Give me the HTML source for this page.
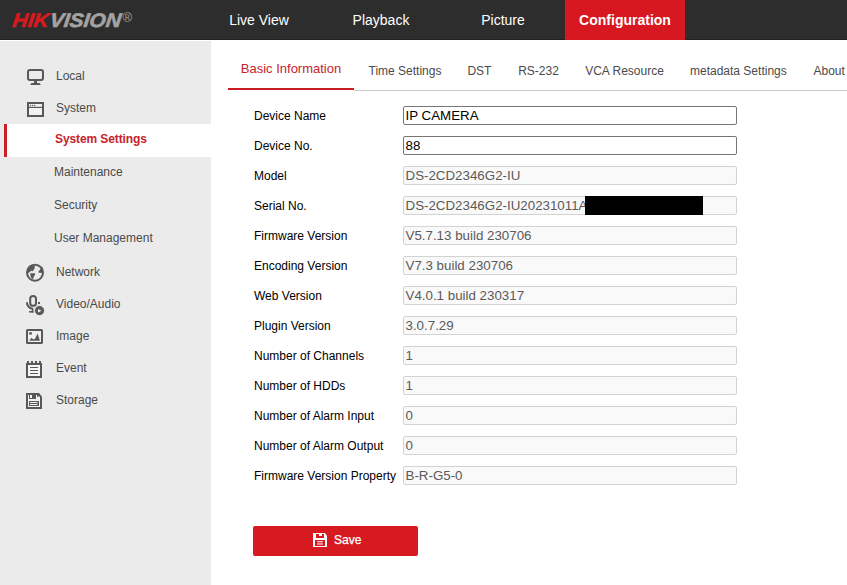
<!DOCTYPE html>
<html><head><meta charset="utf-8"><title>Configuration</title>
<style>
*{box-sizing:border-box;margin:0;padding:0}
html,body{width:847px;height:585px;overflow:hidden;background:#fff;font-family:"Liberation Sans",Arial,sans-serif;font-size:12px;color:#333}
#hdr{position:absolute;left:0;top:0;width:847px;height:40px;background:#2d2d2d;border-bottom:1px solid #222}
#logo{position:absolute;left:12px;top:8px;height:24px;line-height:24px;font-size:19.5px;font-weight:bold;font-style:italic;white-space:nowrap;transform-origin:0 80%;transform:scaleX(1.075) skewX(-6deg);-webkit-text-stroke:.6px currentColor}
#logo .r{color:#d71920}#logo .g{color:#a3a3a3;margin-left:1px}
#reg{position:absolute;left:122.5px;top:9.5px;font-size:13px;color:#a3a3a3;line-height:16px}
.nav{position:absolute;top:0;height:40px;width:122px;text-align:center;line-height:40px;font-size:14px;color:#fff}
.nav.on{background:#d71820;font-weight:bold;width:120px}
#side{position:absolute;left:0;top:41px;width:211px;height:544px;background:#ebebeb}
.mi{position:absolute;left:56px;font-size:12px;color:#4a4a4a;line-height:16px}
.si{position:absolute;left:54px;font-size:12px;color:#4a4a4a;line-height:16px}
#act{position:absolute;left:4px;top:124px;width:207px;height:33px;background:#fff;border-left:3px solid #cb2029}
#act span{position:absolute;left:48px;top:7px;font-weight:bold;color:#c8222a;font-size:12px;line-height:16px;letter-spacing:-.1px}
#ics{position:absolute;left:0;top:0;width:211px;height:585px}
#tabs{position:absolute;left:228px;top:50px;width:619px;height:41px}
#tabs:after{content:"";position:absolute;left:126px;right:0;top:40px;height:1px;background:#cbcbcb}
.tab{position:absolute;top:1px;height:40px;line-height:40px;font-size:12px;color:#4a4a4a;white-space:nowrap}
.tab.on{top:0;left:0;width:126px;text-align:center;color:#c8222a;font-size:13px;border-bottom:2px solid #cb1c24;height:40px;line-height:37px}
.row{position:absolute;left:254px;height:18px;line-height:18px;font-size:12px;color:#000;white-space:nowrap}
.inp{position:absolute;left:403px;width:334px;height:19px;border:1px solid #767676;border-radius:2px;background:#fff;font-size:13.33px;line-height:17px;padding:0 2px 0 1.5px;color:#000;white-space:nowrap;overflow:hidden}
.inp.d{border-color:#d3d3d3;background:#f9f9f9;color:#5a5a5a}
#blk{position:absolute;left:585px;top:196px;width:118px;height:19px;background:#000}
#save{position:absolute;left:253px;top:526px;width:165px;height:30px;background:#d71920;border-radius:2px;color:#fff;font-size:12px;line-height:30px}
#save span{position:absolute;left:81px;top:-1px;-webkit-text-stroke:.25px #fff}
#save svg{position:absolute;left:60px;top:7px;width:14px;height:14px}
</style></head><body>
<div id="hdr">
<div id="logo"><span class="r">HIK</span><span class="g">VISION</span></div><div id="reg">®</div>
<div class="nav" style="left:198px">Live View</div>
<div class="nav" style="left:320px">Playback</div>
<div class="nav" style="left:442px">Picture</div>
<div class="nav on" style="left:565px">Configuration</div>
</div>
<div id="side"></div>
<div class="mi" style="top:68px">Local</div>
<div class="mi" style="top:100px">System</div>
<div id="act"><span>System Settings</span></div>
<div class="si" style="top:164px">Maintenance</div>
<div class="si" style="top:197px">Security</div>
<div class="si" style="top:230px">User Management</div>
<div class="mi" style="top:264px">Network</div>
<div class="mi" style="top:296px">Video/Audio</div>
<div class="mi" style="top:328px">Image</div>
<div class="mi" style="top:360px">Event</div>
<div class="mi" style="top:392px">Storage</div>
<svg id="ics" viewBox="0 0 211 585">
<g fill="none" stroke="#585858" stroke-width="2">
<!-- local -->
<rect x="28" y="70" width="15" height="10" rx="2"/>
<!-- system -->
<rect x="28" y="103" width="15" height="13" fill="#f1f1f1"/>
<!-- globe -->
<circle cx="35" cy="272.7" r="8"/>
<!-- mic -->
<rect x="30.2" y="295.9" width="5.8" height="9.9" rx="2.9"/>
<path d="M26.9 302.3A6.2 6.2 0 0 0 33 308.7"/>
<!-- image -->
<rect x="27" y="330" width="15" height="13" rx=".5" fill="#f0f0f0"/>
<!-- event -->
<rect x="27" y="364" width="14" height="13" fill="#f6f6f6"/>
<!-- storage -->
<path d="M27 394H38.6L41 397V408H27Z" fill="#f4f4f4"/>
</g>
<g fill="#585858">
<rect x="34" y="81" width="3" height="2.5"/><path d="M31.6 83H39.4L41 85H30Z"/>
<rect x="28" y="106.8" width="15" height="1.2"/><circle cx="30.5" cy="105.4" r=".7"/><circle cx="32.6" cy="105.4" r=".7"/><circle cx="34.7" cy="105.4" r=".7"/>
<path d="M27.2 270L29.2 265.8L33.3 264.6L35 267L34 269.4L32.7 271.2L31 270.7L29.8 272L27.6 273.4Z"/>
<path d="M30.2 273.3H34.9L35.1 274.5L33.7 277L33 279.2L31.4 278.2L30.4 275.4Z"/>
<path d="M38 272.2L40.4 269L42.3 267L43.4 271.5L41.4 273L39.4 272.7Z"/>
<rect x="31.8" y="308.4" width="1.6" height="4.2"/><rect x="29.1" y="311" width="4.3" height="1.6"/><rect x="38" y="302" width="2" height="2"/>
<circle cx="39.5" cy="310.6" r="5" stroke="#ebebeb" stroke-width="1"/>
<circle cx="30.5" cy="333.4" r="1.4"/><path d="M29.1 340.7L31.6 337.8L33 339.2L34.9 338.9L37.6 333.6L39.9 340.7Z"/>
<rect x="27" y="361" width="2" height="3"/><rect x="31" y="361" width="2" height="3"/><rect x="35" y="361" width="2" height="3"/><rect x="39" y="361" width="2" height="3"/>
<rect x="30" y="367" width="8" height="1"/><rect x="30" y="370" width="8" height="1"/><rect x="30" y="373" width="8" height="1"/>
<path d="M29 395H36V399H29ZM30 395V398H32V395Z" fill-rule="evenodd"/><rect x="37" y="395" width="1.8" height="1.8"/>
<path d="M29 401H39V406H29ZM30 402V403H37.5V402ZM30 404V405H37.5V404Z" fill-rule="evenodd"/>
</g>
<path d="M38 309V312.5L41.5 310.75Z" fill="#f4f4f4"/>
</svg>
<div id="tabs">
<div class="tab on">Basic Information</div>
<div class="tab" style="left:140.5px">Time Settings</div>
<div class="tab" style="left:239.4px">DST</div>
<div class="tab" style="left:290.2px">RS-232</div>
<div class="tab" style="left:357.2px">VCA Resource</div>
<div class="tab" style="left:462px">metadata Settings</div>
<div class="tab" style="left:585.5px">About</div>
</div>
<div class="row" style="top:107px">Device Name</div><div class="inp" style="top:106px">IP CAMERA</div>
<div class="row" style="top:137px">Device No.</div><div class="inp" style="top:136px">88</div>
<div class="row" style="top:167px">Model</div><div class="inp d" style="top:166px">DS-2CD2346G2-IU</div>
<div class="row" style="top:197px">Serial No.</div><div class="inp d" style="top:196px">DS-2CD2346G2-IU20231011A</div>
<div class="row" style="top:227px">Firmware Version</div><div class="inp d" style="top:226px">V5.7.13 build 230706</div>
<div class="row" style="top:257px">Encoding Version</div><div class="inp d" style="top:256px">V7.3 build 230706</div>
<div class="row" style="top:287px">Web Version</div><div class="inp d" style="top:286px">V4.0.1 build 230317</div>
<div class="row" style="top:317px">Plugin Version</div><div class="inp d" style="top:316px">3.0.7.29</div>
<div class="row" style="top:347px">Number of Channels</div><div class="inp d" style="top:346px">1</div>
<div class="row" style="top:377px">Number of HDDs</div><div class="inp d" style="top:376px">1</div>
<div class="row" style="top:407px">Number of Alarm Input</div><div class="inp d" style="top:406px">0</div>
<div class="row" style="top:437px">Number of Alarm Output</div><div class="inp d" style="top:436px">0</div>
<div class="row" style="top:467px">Firmware Version Property</div><div class="inp d" style="top:466px">B-R-G5-0</div>
<div id="blk"></div>
<div id="save"><svg viewBox="0 0 14 14"><path d="M0 0H11.8L14 2.8V14H0Z" fill="#fff"/><path d="M3 1H6V3H9V1H11V5H3ZM2 7H12V13H2ZM4 8.2V9.2H10V8.2ZM4 10.4V11.4H10V10.4Z" fill="#d71920" fill-rule="evenodd"/></svg><span>Save</span></div>
</body></html>
